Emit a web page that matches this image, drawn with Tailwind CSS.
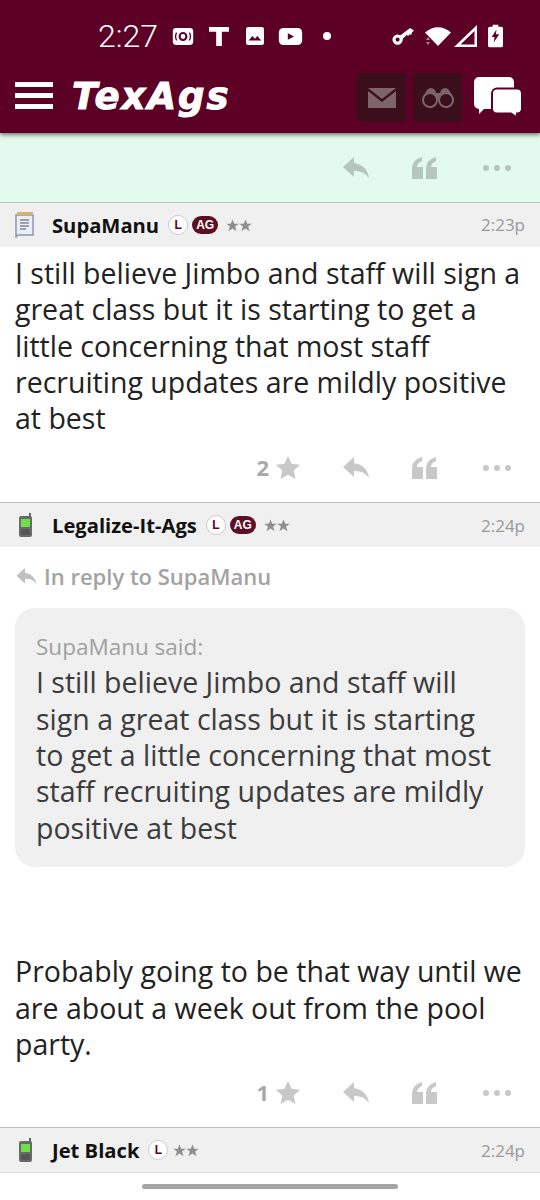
<!DOCTYPE html>
<html lang="en">
<head>
    <meta charset="UTF-8">
    <meta name="viewport" content="width=device-width, initial-scale=1.0">
    <title>TexAgs</title>
    <script src="https://cdn.jsdelivr.net/npm/@tailwindcss/browser@4"></script>
</head>
<body class="bg-white h-[1200px] overflow-hidden relative font-['Open_Sans',sans-serif]">

    <!-- top bar -->
    <header class="bg-[#5d0026] h-[133px] shadow-[0_2px_4px_rgba(0,0,0,0.5)] relative z-10">
        <div class="h-[72px] flex items-center pl-[98px] text-white">
            <span class="text-[32px] font-['Roboto',sans-serif] font-light w-[74px]">2:27</span>
            <svg width="22" height="17" viewBox="0 0 24 20"><rect x="0" y="0" width="24" height="20" rx="4" fill="#fff"/><circle cx="12" cy="10" r="4" fill="none" stroke="#5d0026" stroke-width="2.4"/><path d="M4.500 5.500a9 9 0 0 0 0 9M19.500 5.500a9 9 0 0 1 0 9" fill="none" stroke="#5d0026" stroke-width="1.600"/></svg>
            <svg class="ml-[15px]" width="20" height="19" viewBox="0 0 21 20"><path d="M0 0h21v5h-7.500v15h-6V5H0z" fill="#fff"/></svg>
            <svg class="ml-[17px]" width="18" height="18" viewBox="0 0 20 20"><rect width="20" height="20" rx="2.500" fill="#fff"/><path d="M3 15l4-5 3 3 2.500-3 4.500 5z" fill="#5d0026"/></svg>
            <svg class="ml-[14px]" width="25" height="17" viewBox="0 0 26 19"><rect width="26" height="19" rx="5" fill="#fff"/><path d="M10 6l7 3.500-7 3.500z" fill="#5d0026"/></svg>
            <span class="ml-[20px] w-[8px] h-[8px] rounded-full bg-white"></span>
            <svg class="ml-[61px]" width="22" height="18" viewBox="0 0 24 20"><circle cx="6" cy="14" r="4" fill="none" stroke="#fff" stroke-width="3.400"/><path d="M8 10L20 1l4 3-2 2-1 3-2-1-1 2-2-1-5 5z" fill="#fff"/></svg>
            <svg class="ml-[11px]" width="26" height="20" viewBox="0 0 26 20"><path d="M0 6.500Q13-4 26 6.500L13 20z" fill="#fff"/><path d="M1 14l2-3 2 3zM1 16l2 3 2-3z" fill="#a58a94"/></svg>
            <svg class="ml-[3px]" width="23" height="22" viewBox="0 0 23 22"><path d="M23 0v22H0zM20.500 6L6.500 19.500h14z" fill="#fff" fill-rule="evenodd"/></svg>
            <svg class="ml-[11px]" width="15" height="24" viewBox="0 0 16 24"><path d="M5 0h6v2h3a2 2 0 0 1 2 2v18a2 2 0 0 1-2 2H2a2 2 0 0 1-2-2V4a2 2 0 0 1 2-2h3z" fill="#fff"/><path d="M9 5L4 13h3l-1 6 6-9H8.500z" fill="#5d0026"/></svg>
        </div>
        <div class="h-[61px] flex items-start pl-[15px] pr-[18px]">
            <div class="flex flex-col gap-[6px] w-[38px] mt-[10px]">
                <span class="h-[5px] bg-white"></span>
                <span class="h-[5px] bg-white"></span>
                <span class="h-[5px] bg-white"></span>
            </div>
            <span class="ml-[19px] mt-[0px] text-[37px] leading-[50px] tracking-[2px] font-bold italic text-white font-['DejaVu_Sans',sans-serif] [-webkit-text-stroke:1px_white]">TexAgs</span>
            <div class="ml-auto flex items-start gap-[7px] mt-[1px]">
                <div class="w-[49px] h-[49px] rounded bg-[#3a0f1b] flex items-center justify-center">
                    <svg width="28" height="20" viewBox="0 0 28 20"><path d="M0 0h28L14 11z" fill="#7d636a"/><path d="M0 3l14 11L28 3v17H0z" fill="#7d636a"/></svg>
                </div>
                <div class="w-[49px] h-[49px] rounded bg-[#3a0f1b] flex items-center justify-center">
                    <svg width="34" height="22" viewBox="0 0 34 22"><path d="M6 3q4-4 8 0l1 3h4l1-3q4-4 8 0l5 9H1z" fill="#7d636a"/><circle cx="9" cy="13" r="7" fill="#3a0f1b" stroke="#7d636a" stroke-width="2"/><circle cx="25" cy="13" r="7" fill="#3a0f1b" stroke="#7d636a" stroke-width="2"/></svg>
                </div>
                <svg class="ml-[5px] mt-[4px]" width="48" height="40" viewBox="0 0 48 40"><path d="M5 0h30a5 5 0 0 1 5 5v22a5 5 0 0 1-5 5H10l-5 5 0-5a5 5 0 0 1-5-5V5a5 5 0 0 1 5-5z" fill="#fff"/><path d="M23 11.500h20a5 5 0 0 1 5 5v15a5 5 0 0 1-5 5l0 4-6-4H23a5 5 0 0 1-5-5v-15a5 5 0 0 1 5-5z" fill="#fff" stroke="#5d0026" stroke-width="2"/></svg>
            </div>
        </div>
    </header>

    <!-- actions left over from the post above -->
    <div class="bg-[#e3fbee] h-[70px] border-b border-[#b9c2bd] flex items-center justify-end pr-[29px] pt-[1px]">
        <svg class="mr-[43px]" width="26" height="22" viewBox="0 0 26 22"><path d="M11 0L0 10l11 10v-6q9-1 15 7Q24 8 11 6z" fill="#b5c6bd"/></svg>
        <svg class="mr-[46px]" width="25" height="22" viewBox="0 0 25 22"><path d="M0 22V11Q0 3 10 0v4Q5 6 5 10h6v12zM14 22V11q0-8 10-11v4q-5 2-5 6h6v12z" fill="#b5c6bd"/></svg>
        <div class="flex gap-[5px]">
            <span class="w-[6px] h-[6px] rounded-full bg-[#b5c6bd]"></span>
            <span class="w-[6px] h-[6px] rounded-full bg-[#b5c6bd]"></span>
            <span class="w-[6px] h-[6px] rounded-full bg-[#b5c6bd]"></span>
        </div>
    </div>

    <!-- post 1 -->
    <div class="h-[44px] bg-[#f0f0f0] flex items-center pl-[15px] pr-[15px]">
        <svg width="19" height="26" viewBox="0 0 19 26"><path d="M1 3h17v20H3l-2 2z" fill="#eceef6" stroke="#8d96b4" stroke-width="1.500"/><rect x="2" y="0" width="16" height="3" fill="#d6b56a"/><path d="M5 8h9M5 11h9M5 14h9M5 17h6" stroke="#556" stroke-width="1.200"/></svg>
        <span class="ml-[18px] text-[20.200px] font-bold text-[#111]">SupaManu</span>
        <span class="ml-[9px] w-[20px] h-[20px] rounded-full bg-white border border-[#ccc] flex items-center justify-center text-[12px] font-bold text-[#5d0026] font-['Liberation_Sans',sans-serif]">L</span>
        <span class="ml-[4px] w-[26px] h-[18px] rounded-full bg-[#5d0f24] flex items-center justify-center text-[12px] font-bold text-white font-['Liberation_Sans',sans-serif]">AG</span>
        <svg class="ml-[8px]" width="26" height="13" viewBox="0 0 50 25"><path d="M12.500 1l3.300 8h8.700l-7 5.500 2.700 9-7.700-5.300-7.700 5.300 2.700-9-7-5.500h8.700zM37.500 1l3.300 8h8.700l-7 5.500 2.700 9-7.700-5.300-7.700 5.300 2.700-9-7-5.500h8.700z" fill="#8f8f8f"/></svg>
        <span class="ml-auto text-[17px] text-[#9a9a9a]">2:23p</span>
    </div>
    <p class="px-[15px] pt-[8px] text-[28.500px] leading-[36.300px] text-[#222]">I still believe Jimbo and staff will sign a great class but it is starting to get a little concerning that most staff recruiting updates are mildly positive at best</p>
    <div class="h-[47px] mt-[8px] mb-[11px] flex items-center justify-end pr-[29px]">
        <span class="text-[22px] font-bold text-[#a8a8a8] mr-[7px]">2</span>
        <svg class="mr-[43px]" width="24" height="23" viewBox="0 0 25 24"><path d="M12.500 0l3.700 8 8.800 1-6.500 6 1.800 9-7.800-4.500L4.700 24l1.800-9L0 9l8.800-1z" fill="#c8c8c8"/></svg>
        <svg class="mr-[43px]" width="26" height="22" viewBox="0 0 26 22"><path d="M11 0L0 10l11 10v-6q9-1 15 7Q24 8 11 6z" fill="#c8c8c8"/></svg>
        <svg class="mr-[46px]" width="25" height="22" viewBox="0 0 25 22"><path d="M0 22V11Q0 3 10 0v4Q5 6 5 10h6v12zM14 22V11q0-8 10-11v4q-5 2-5 6h6v12z" fill="#c8c8c8"/></svg>
        <div class="flex gap-[5px]">
            <span class="w-[6px] h-[6px] rounded-full bg-[#c8c8c8]"></span>
            <span class="w-[6px] h-[6px] rounded-full bg-[#c8c8c8]"></span>
            <span class="w-[6px] h-[6px] rounded-full bg-[#c8c8c8]"></span>
        </div>
    </div>

    <!-- post 2 -->
    <div class="h-[45px] bg-[#f0f0f0] border-t border-[#bdbdbd] flex items-center pl-[18px] pr-[15px]">
        <svg width="16" height="25" viewBox="0 0 16 25"><path d="M11 0h2v4h-2z" fill="#666"/><rect x="1" y="3" width="13" height="21" rx="2" fill="#6a6a6a"/><rect x="3" y="6" width="9" height="8" fill="#6ee04a"/><rect x="3" y="16" width="9" height="6" fill="#555"/></svg>
        <span class="ml-[18px] text-[20.200px] font-bold text-[#111]">Legalize-It-Ags</span>
        <span class="ml-[9px] w-[20px] h-[20px] rounded-full bg-white border border-[#ccc] flex items-center justify-center text-[12px] font-bold text-[#5d0026] font-['Liberation_Sans',sans-serif]">L</span>
        <span class="ml-[4px] w-[26px] h-[18px] rounded-full bg-[#5d0f24] flex items-center justify-center text-[12px] font-bold text-white font-['Liberation_Sans',sans-serif]">AG</span>
        <svg class="ml-[8px]" width="26" height="13" viewBox="0 0 50 25"><path d="M12.500 1l3.300 8h8.700l-7 5.500 2.700 9-7.700-5.300-7.700 5.300 2.700-9-7-5.500h8.700zM37.500 1l3.300 8h8.700l-7 5.500 2.700 9-7.700-5.300-7.700 5.300 2.700-9-7-5.500h8.700z" fill="#8f8f8f"/></svg>
        <span class="ml-auto text-[17px] text-[#9a9a9a]">2:24p</span>
    </div>
    <div class="flex items-center pl-[16px] h-[61px] pb-[2px] text-[22px] font-semibold text-[#a3a3a3]">
        <svg class="mr-[7px]" width="21" height="17" viewBox="0 0 26 22"><path d="M11 0L0 10l11 10v-6q9-1 15 7Q24 8 11 6z" fill="#c0c0c0"/></svg>
        In reply to SupaManu
    </div>
    <div class="mx-[15px] h-[259px] bg-[#f0f0f0] rounded-[20px] px-[21px] pt-[23px]">
        <p class="text-[22.500px] leading-[32px] text-[#a0a0a0]">SupaManu said:</p>
        <p class="text-[28.500px] leading-[36.300px] text-[#3c3c3c] mt-[1px]">I still believe Jimbo and staff will sign a great class but it is starting to get a little concerning that most staff recruiting updates are mildly positive at best</p>
    </div>
    <p class="px-[15px] mt-[86px] text-[28.500px] leading-[36.300px] text-[#222]">Probably going to be that way until we are about a week out from the pool party.</p>
    <div class="h-[47px] mt-[7px] mb-[11px] flex items-center justify-end pr-[29px]">
        <span class="text-[22px] font-bold text-[#a8a8a8] mr-[7px]">1</span>
        <svg class="mr-[43px]" width="24" height="23" viewBox="0 0 25 24"><path d="M12.500 0l3.700 8 8.800 1-6.500 6 1.800 9-7.800-4.500L4.700 24l1.800-9L0 9l8.800-1z" fill="#c8c8c8"/></svg>
        <svg class="mr-[43px]" width="26" height="22" viewBox="0 0 26 22"><path d="M11 0L0 10l11 10v-6q9-1 15 7Q24 8 11 6z" fill="#c8c8c8"/></svg>
        <svg class="mr-[46px]" width="25" height="22" viewBox="0 0 25 22"><path d="M0 22V11Q0 3 10 0v4Q5 6 5 10h6v12zM14 22V11q0-8 10-11v4q-5 2-5 6h6v12z" fill="#c8c8c8"/></svg>
        <div class="flex gap-[5px]">
            <span class="w-[6px] h-[6px] rounded-full bg-[#c8c8c8]"></span>
            <span class="w-[6px] h-[6px] rounded-full bg-[#c8c8c8]"></span>
            <span class="w-[6px] h-[6px] rounded-full bg-[#c8c8c8]"></span>
        </div>
    </div>

    <!-- post 3 -->
    <div class="h-[46px] bg-[#f0f0f0] border-y border-t-[#bdbdbd] border-b-[#dcdcdc] flex items-center pl-[18px] pr-[15px]">
        <svg width="16" height="25" viewBox="0 0 16 25"><path d="M11 0h2v4h-2z" fill="#666"/><rect x="1" y="3" width="13" height="21" rx="2" fill="#6a6a6a"/><rect x="3" y="6" width="9" height="8" fill="#6ee04a"/><rect x="3" y="16" width="9" height="6" fill="#555"/></svg>
        <span class="ml-[18px] text-[20.200px] font-bold text-[#111]">Jet Black</span>
        <span class="ml-[9px] w-[20px] h-[20px] rounded-full bg-white border border-[#ccc] flex items-center justify-center text-[12px] font-bold text-[#5d0026] font-['Liberation_Sans',sans-serif]">L</span>
        <svg class="ml-[5px]" width="26" height="13" viewBox="0 0 50 25"><path d="M12.500 1l3.300 8h8.700l-7 5.500 2.700 9-7.700-5.300-7.700 5.300 2.700-9-7-5.500h8.700zM37.500 1l3.300 8h8.700l-7 5.500 2.700 9-7.700-5.300-7.700 5.300 2.700-9-7-5.500h8.700z" fill="#8f8f8f"/></svg>
        <span class="ml-auto text-[17px] text-[#9a9a9a]">2:24p</span>
    </div>

    <!-- gesture bar -->
    <div class="absolute left-[142px] top-[1184px] w-[256px] h-[5px] rounded-full bg-[#a6a6a6]"></div>
</body>
</html>
